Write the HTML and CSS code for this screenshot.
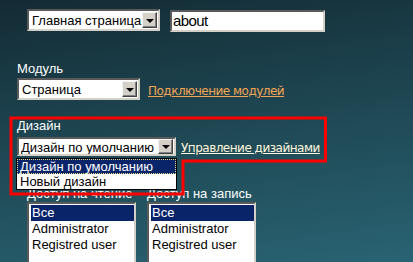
FILE: index.html
```html
<!DOCTYPE html>
<html lang="ru">
<head>
<meta charset="utf-8">
<title>Настройки страницы</title>
<link rel="stylesheet" href="styles.css">
</head>
<body>
<div class="page">
  <div class="toprow">
    <div class="combo combo-page"><span class="combo-text">Главная страница</span><span class="combo-btn"><span class="arrow"></span></span></div>
    <div class="textbox">about</div>
  </div>

  <div class="field field-module">
    <div class="label">Модуль</div>
    <div class="row row-module">
      <div class="combo combo-module"><span class="combo-text">Страница</span><span class="combo-btn"><span class="arrow"></span></span></div>
      <a class="link link-orange" href="#">Подключение модулей</a>
    </div>
  </div>

  <div class="field field-design">
    <div class="label">Дизайн</div>
    <div class="row row-design">
      <div class="combo combo-design"><span class="combo-text">Дизайн по умолчанию</span><span class="combo-btn"><span class="arrow"></span></span></div>
      <a class="link link-light" href="#">Управление дизайнами</a>
    </div>
  </div>

  <div class="access">
    <div class="access-col">
      <div class="label">Доступ на чтение</div>
      <div class="listbox">
        <div class="opt selected">Все</div>
        <div class="opt">Administrator</div>
        <div class="opt">Registred user</div>
      </div>
    </div>
    <div class="access-col">
      <div class="label">Доступ на запись</div>
      <div class="listbox">
        <div class="opt selected">Все</div>
        <div class="opt">Administrator</div>
        <div class="opt">Registred user</div>
      </div>
    </div>
  </div>

  <div class="popup">
    <div class="popup-item active">Дизайн по умолчанию</div>
    <div class="popup-item">Новый дизайн</div>
  </div>

  <svg class="annotation" width="413" height="262" viewBox="0 0 413 262">
    <polygon points="11,118 325.5,118 325.5,161 183,161 183,194 11,194" fill="none" stroke="#ff0000" stroke-width="3"/>
  </svg>
</div>
</body>
</html>
```

FILE: styles.css
```css
html, body {
  margin: 0;
  padding: 0;
}

body {
  width: 413px;
  height: 262px;
  overflow: hidden;
  background: linear-gradient(172deg, #142b34 0%, #1b404b 35%, #22505d 65%, #296373 100%);
}

.page {
  position: relative;
  width: 413px;
  height: 262px;
  overflow: hidden;
  box-sizing: border-box;
  padding-top: 9px;
  font-family: "Liberation Sans", Arial, sans-serif;
  font-size: 13px;
  color: #000;
}

/* ---------- top row ---------- */
.toprow {
  display: flex;
  align-items: flex-start;
  gap: 10px;
  margin-left: 27px;
}

/* ---------- combo box (classic windows look) ---------- */
.combo {
  display: flex;
  align-items: stretch;
  box-sizing: border-box;
  height: 22px;
  background: #fff;
  border-style: solid;
  border-width: 2px;
  border-color: #5a5a5a #d4d0c8 #d4d0c8 #5a5a5a;
  padding: 1px 1px 1px 0;
}

.combo-text {
  flex: 1;
  display: flex;
  align-items: center;
  padding-left: 3px;
  white-space: nowrap;
  overflow: hidden;
}

.combo-btn {
  width: 15px;
  box-sizing: border-box;
  display: flex;
  align-items: center;
  justify-content: center;
  background: #d4d0c8;
  border-style: solid;
  border-width: 1px;
  border-color: #f4f4f4 #404040 #404040 #f4f4f4;
  box-shadow: inset -1px -1px 0 #808080;
}

.arrow {
  width: 0;
  height: 0;
  border-left: 4px solid transparent;
  border-right: 4px solid transparent;
  border-top: 4px solid #000;
  margin-top: 1px;
}

.combo-page {
  width: 133px;
}

.combo-module {
  width: 123px;
}

.combo-design {
  width: 159px;
  height: 19px;
  padding-top: 0;
  padding-bottom: 0;
}

.combo-design .combo-text {
  padding-left: 2px;
  padding-top: 1px;
}

/* ---------- text input ---------- */
.textbox {
  box-sizing: border-box;
  width: 155px;
  height: 22px;
  margin-top: 1px;
  background: #fff;
  border-style: solid;
  border-width: 2px;
  border-color: #5a5a5a #d4d0c8 #d4d0c8 #5a5a5a;
  padding-left: 1px;
  line-height: 18px;
  font-size: 15px;
  letter-spacing: -0.6px;
}

/* ---------- fields ---------- */
.field {
  margin-left: 17px;
}

.label {
  font-family: "Liberation Sans", Arial, sans-serif;
  font-size: 13px;
  line-height: 14px;
  color: #ffffff;
  white-space: nowrap;
}

.row {
  display: flex;
  align-items: center;
}

.field-module {
  margin-top: 30px;
}

.row-module {
  margin-top: 2px;
}

.field-design {
  margin-top: 19px;
}

.row-design {
  margin-top: 4px;
}

.link {
  font-family: "DejaVu Sans", Verdana, sans-serif;
  font-size: 12px;
  letter-spacing: -0.5px;
  line-height: 14px;
  white-space: nowrap;
  text-decoration: underline;
}

.link-orange {
  color: #f5a552;
  margin-left: 8px;
  margin-top: 3px;
}

.link-light {
  color: #fff6de;
  margin-left: 5px;
  margin-top: 3px;
}

/* ---------- access lists ---------- */
.access {
  display: flex;
  gap: 11px;
  margin-left: 27px;
  margin-top: 31px;
}

.access-col {
  width: 109px;
}

.access .label {
  margin-bottom: 1px;
}

.listbox {
  box-sizing: border-box;
  width: 109px;
  height: 60px;
  background: #fff;
  border-style: solid;
  border-width: 2px 2px 0 2px;
  border-color: #5a5a5a #d4d0c8 #d4d0c8 #5a5a5a;
  padding: 1px 0 0 2px;
}

.opt {
  height: 16px;
  line-height: 16px;
  padding-left: 1px;
  white-space: nowrap;
}

.opt.selected {
  background: #0a246a;
  color: #fff;
}

/* ---------- open dropdown popup ---------- */
.popup {
  position: absolute;
  left: 16px;
  top: 158px;
  width: 161px;
  box-sizing: border-box;
  background: #fff;
  border: 1px solid #000;
}

.popup-item {
  height: 15px;
  line-height: 15px;
  padding-left: 3px;
  white-space: nowrap;
  box-sizing: border-box;
}

.popup-item.active {
  background: #0a246a;
  color: #fff;
  outline: 1px dotted #e8dc8a;
  outline-offset: -1px;
}

/* ---------- red annotation ---------- */
.annotation {
  position: absolute;
  left: 0;
  top: 0;
  pointer-events: none;
}
```
